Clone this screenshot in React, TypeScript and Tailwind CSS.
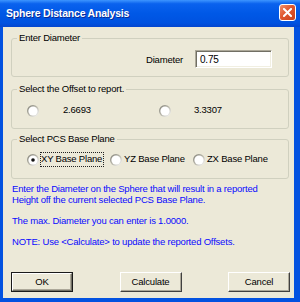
import React from 'react';

function Radio({ checked = false }: { checked?: boolean }) {
  return (
    <svg width="12" height="12" viewBox="0 0 12 12" className="shrink-0">
      <defs>
        <linearGradient id="rbEdge" x1="0" y1="0" x2="1" y2="1">
          <stop offset="0" stopColor="#7a7a72" />
          <stop offset="0.45" stopColor="#b4b2a6" />
          <stop offset="1" stopColor="#ffffff" />
        </linearGradient>
      </defs>
      <circle cx="6" cy="6" r="6" fill="url(#rbEdge)" />
      <circle cx="6" cy="6" r="4.6" fill="#ffffff" />
      {checked && <circle cx="6" cy="6" r="1.8" fill="#111111" />}
    </svg>
  );
}

function GroupBox({
  title,
  className,
  children,
}: {
  title: string;
  className: string;
  children: React.ReactNode;
}) {
  return (
    <div className={`relative border border-[#d0d0bf] rounded-[3px] ${className}`}>
      <span className="absolute left-[5px] -top-[7px] px-[2px] bg-[#ece9d8] leading-[12px] whitespace-nowrap">
        {title}
      </span>
      {children}
    </div>
  );
}

function Button({ label, isDefault = false }: { label: string; isDefault?: boolean }) {
  if (isDefault) {
    return (
      <div className="w-[62px] h-[20px] border border-[#1a1a1a] bg-[#ece9d8]">
        <div className="w-full h-full flex items-center justify-center border-t border-l border-white border-b border-r border-b-[#716f64] border-r-[#716f64] shadow-[inset_-1px_-1px_0_#aca899]">
          {label}
        </div>
      </div>
    );
  }
  return (
    <div className="w-[62px] h-[20px] flex items-center justify-center bg-[#ece9d8] border-t border-l border-white border-b border-r border-b-[#404040] border-r-[#404040] shadow-[inset_-1px_-1px_0_#aca899]">
      {label}
    </div>
  );
}

export default function App() {
  return (
    <div className="w-[300px] h-[302px] flex flex-col bg-[#0352e0] font-['Liberation_Sans',Arial,sans-serif] select-none">
      {/* title bar */}
      <div className="h-[27px] shrink-0 flex items-start pl-[6px] pr-[4px] bg-[linear-gradient(to_bottom,#3d95ff_0%,#0a62ee_14%,#0058e6_50%,#0052e0_85%,#0446cf_100%)]">
        <span className="mt-[6px] text-white font-bold text-[10.5px] tracking-[-0.2px] leading-[14px] [text-shadow:1px_1px_0_#0a2a94]">
          Sphere Distance Analysis
        </span>
        <div className="ml-auto mt-[4px] w-[17px] h-[17px] rounded-[3px] border border-white bg-[linear-gradient(135deg,#f0906e_0%,#e0582f_45%,#c8401c_100%)] flex items-center justify-center">
          <svg width="9" height="9" viewBox="0 0 9 9">
            <path d="M1 1 L8 8 M8 1 L1 8" stroke="#ffffff" strokeWidth="2" strokeLinecap="square" />
          </svg>
        </div>
      </div>

      {/* body */}
      <div className="flex-1 ml-[3px] mr-[6px] mb-[4px] bg-[#ece9d8] pl-[8px] pr-[5px] pt-[11px] text-[9.5px] tracking-[-0.2px] text-black flex flex-col">
        <GroupBox title="Enter Diameter" className="h-[39px] flex items-start justify-end pt-[11px] pr-[16px]">
          <span className="leading-[18px] mt-[1px]">Diameter</span>
          <div className="ml-[12px] w-[77px] h-[18px] bg-white border-t border-l border-[#aca899] border-b border-r border-b-white border-r-white shadow-[inset_1px_1px_0_#716f64,inset_-1px_-1px_0_#f1efe2] flex items-center pl-[4px] text-[10px]">
            0.75
          </div>
        </GroupBox>

        <GroupBox title="Select the Offset to report." className="mt-[12px] h-[40px] flex items-center pl-[15px] pt-[3px]">
          <div className="w-[132px] flex items-center">
            <Radio />
            <span className="ml-[24px]">2.6693</span>
          </div>
          <div className="flex items-center">
            <Radio />
            <span className="ml-[23px]">3.3307</span>
          </div>
        </GroupBox>

        <GroupBox title="Select PCS Base Plane" className="mt-[10px] h-[40px] flex items-center pl-[15px] pt-[1px]">
          <div className="w-[83px] flex items-center">
            <Radio checked />
            <span className="ml-[1px] h-[15px] flex items-center pr-[1px] border border-dotted border-[#222]">
              XY Base Plane
            </span>
          </div>
          <div className="w-[83px] flex items-center">
            <Radio />
            <span className="ml-[1px] h-[15px] flex items-center border border-transparent">YZ Base Plane</span>
          </div>
          <div className="flex items-center">
            <Radio />
            <span className="ml-[1px] h-[15px] flex items-center border border-transparent">ZX Base Plane</span>
          </div>
        </GroupBox>

        <div className="mt-[4px] text-[#0a0aff] leading-[11px] pl-[1px]">
          <p>
            Enter the Diameter on the Sphere that will result in a reported
            <br />
            Height off the current selected PCS Base Plane.
          </p>
          <p className="mt-[10px]">The max. Diameter you can enter is 1.0000.</p>
          <p className="mt-[10px]">NOTE: Use &lt;Calculate&gt; to update the reported Offsets.</p>
        </div>

        <div className="mt-[25px] flex justify-between -mr-[1px]">
          <Button label="OK" isDefault />
          <Button label="Calculate" />
          <Button label="Cancel" />
        </div>
      </div>
    </div>
  );
}
